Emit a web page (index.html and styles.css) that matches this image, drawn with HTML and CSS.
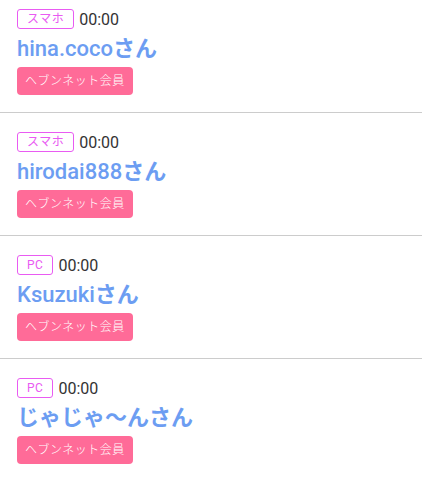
FILE: index.html
```html
<!DOCTYPE html>
<html lang="ja">
<head>
    <meta charset="UTF-8">
    <meta name="viewport" content="width=device-width, initial-scale=1.0">
    <title>足あと</title>
    <link rel="stylesheet" href="styles.css">
</head>
<body>
    <ul class="visitor-list">
        <li class="visitor">
            <div class="visitor-head">
                <span class="device">スマホ</span>
                <span class="time">00:00</span>
            </div>
            <div class="visitor-name">hina.coco<span class="jp">さん</span></div>
            <span class="member">ヘブンネット会員</span>
        </li>
        <li class="visitor">
            <div class="visitor-head">
                <span class="device">スマホ</span>
                <span class="time">00:00</span>
            </div>
            <div class="visitor-name">hirodai888<span class="jp">さん</span></div>
            <span class="member">ヘブンネット会員</span>
        </li>
        <li class="visitor">
            <div class="visitor-head">
                <span class="device">PC</span>
                <span class="time">00:00</span>
            </div>
            <div class="visitor-name">Ksuzuki<span class="jp">さん</span></div>
            <span class="member">ヘブンネット会員</span>
        </li>
        <li class="visitor">
            <div class="visitor-head">
                <span class="device">PC</span>
                <span class="time">00:00</span>
            </div>
            <div class="visitor-name"><span class="jp">じゃじゃ〜んさん</span></div>
            <span class="member">ヘブンネット会員</span>
        </li>
    </ul>
</body>
</html>
```

FILE: styles.css
```css
body {
    margin: 0;
    background-color: #ffffff;
    font-family: Roboto, "Noto Sans CJK JP", sans-serif;
}

/* la lista esta desplazada, la primera fila queda cortada arriba */
.visitor-list {
    list-style: none;
    margin: -10px 0 0;
    padding: 0;
}

.visitor {
    padding: 19px 17px 17px;
    border-bottom: 1px solid #cccccc;
    height: 86px;
}

.visitor-head {
    display: flex;
    align-items: center;
    gap: 5px;
    height: 20px;
}

.device {
    box-sizing: border-box;
    height: 20px;
    padding: 0 9px;
    border: 1px solid #e95bf2;
    border-radius: 3px;
    color: #e95bf2;
    font-size: 12px;
    letter-spacing: 0.5px;
    line-height: 18px;
}

.time {
    color: #333333;
    font-size: 16px;
}

.visitor-name {
    margin-top: 4px;
    height: 32px;
    line-height: 32px;
    color: #6c9df2;
    font-size: 22px;
    font-weight: 500;
}

.jp {
    font-family: "Noto Sans CJK JP", sans-serif;
    font-weight: 700;
    line-height: 1;
}

.member {
    display: inline-block;
    box-sizing: border-box;
    width: 116px;
    height: 28px;
    margin-top: 2px;
    border-radius: 4px;
    background-color: #ff6b98;
    color: #ffffff;
    font-size: 12px;
    font-weight: 300;
    letter-spacing: 0.5px;
    line-height: 28px;
    text-align: center;
}
```
